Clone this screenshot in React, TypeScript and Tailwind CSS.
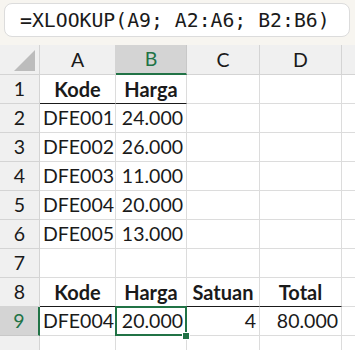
import React from "react";

type Cell = { text?: string; bold?: boolean; align?: "left" | "center" | "right"; underline?: boolean };

const cols = ["A", "B", "C", "D"];

const rows: Cell[][] = [
  [{ text: "Kode", bold: true, align: "center", underline: true }, { text: "Harga", bold: true, align: "center", underline: true }, {}, {}],
  [{ text: "DFE001" }, { text: "24.000", align: "right" }, {}, {}],
  [{ text: "DFE002" }, { text: "26.000", align: "right" }, {}, {}],
  [{ text: "DFE003" }, { text: "11.000", align: "right" }, {}, {}],
  [{ text: "DFE004" }, { text: "20.000", align: "right" }, {}, {}],
  [{ text: "DFE005" }, { text: "13.000", align: "right" }, {}, {}],
  [{}, {}, {}, {}],
  [
    { text: "Kode", bold: true, align: "center", underline: true },
    { text: "Harga", bold: true, align: "center", underline: true },
    { text: "Satuan", bold: true, align: "center", underline: true },
    { text: "Total", bold: true, align: "center", underline: true },
  ],
  [{ text: "DFE004" }, { text: "20.000", align: "right" }, { text: "4", align: "right" }, { text: "80.000", align: "right" }],
];

const alignClass = { left: "justify-start pl-[3px]", center: "justify-center", right: "justify-end pr-[3px]" };

export default function App() {
  return (
    <div className="w-[355px] h-[350px] overflow-hidden bg-[#f7f5f0] font-['Lato',sans-serif] text-[#1a1a1a]">
      <div className="pt-[3px] px-[4px] pb-[8px] pr-[5px]">
        <div className="h-[34px] rounded-[8px] border border-[#dcdcdc] bg-white flex items-center pl-[15px] pt-[1px] font-['DejaVu_Sans_Mono',monospace] text-[19.8px]">
          =XLOOKUP(A9; A2:A6; B2:B6)
        </div>
      </div>

      <div className="grid grid-cols-[40px_76px_71px_73px_82px_1fr] bg-white">
        {/* header row */}
        <div className="h-[30px] bg-[#f0f0f0] border-r border-b border-[#d4d4d4] relative">
          <div className="absolute right-[4px] bottom-[3px] w-0 h-0 border-l-[21px] border-l-transparent border-b-[21px] border-b-[#bcbcbc]" />
        </div>
        {cols.map((c) =>
          c === "B" ? (
            <div key={c} className="h-[30px] bg-[#d4d4d4] border-r border-[#c8c8c8] border-b-2 border-b-[#217346] flex items-center justify-center text-[19.5px] text-[#217346]">
              {c}
            </div>
          ) : (
            <div key={c} className="h-[30px] bg-[#f0f0f0] border-r border-b border-[#d4d4d4] flex items-center justify-center text-[19.5px]">
              {c}
            </div>
          )
        )}
        <div className="h-[30px] bg-[#f0f0f0] border-b border-[#d4d4d4]" />

        {rows.map((r, i) => {
          const sel = i === 8;
          return (
            <React.Fragment key={i}>
              <div
                className={
                  sel
                    ? "h-[29px] bg-[#d4d4d4] border-b border-[#c8c8c8] border-r-2 border-r-[#217346] flex items-center justify-center text-[19.5px] text-[#217346]"
                    : "h-[29px] bg-[#f0f0f0] border-r border-b border-[#d4d4d4] flex items-center justify-center text-[19.5px]"
                }
              >
                {i + 1}
              </div>
              {r.map((cell, j) => (
                <div
                  key={j}
                  className={`h-[29px] border-r border-[#dcdcdc] flex items-center text-[19.5px] relative ${
                    cell.underline ? "border-b border-b-[#1a1a1a]" : "border-b"
                  } ${alignClass[cell.align ?? "left"]} ${cell.bold ? "font-bold text-[20px]" : ""}`}
                >
                  {cell.text}
                  {sel && j === 1 && (
                    <>
                      <div className="absolute z-10 -left-[1px] -top-[1px] -right-[1px] -bottom-[1px] border-2 border-[#217346]" />
                      <div className="absolute z-20 -right-[4px] -bottom-[5px] w-[8px] h-[8px] bg-[#217346] border border-white" />
                    </>
                  )}
                </div>
              ))}
              <div className="h-[29px] border-b border-[#dcdcdc]" />
            </React.Fragment>
          );
        })}
        <div className="h-[29px] bg-[#f0f0f0] border-r border-[#d4d4d4]" />
        <div className="h-[29px] border-r border-[#dcdcdc]" />
        <div className="h-[29px] border-r border-[#dcdcdc]" />
        <div className="h-[29px] border-r border-[#dcdcdc]" />
        <div className="h-[29px] border-r border-[#dcdcdc]" />
        <div className="h-[29px]" />
      </div>
    </div>
  );
}
